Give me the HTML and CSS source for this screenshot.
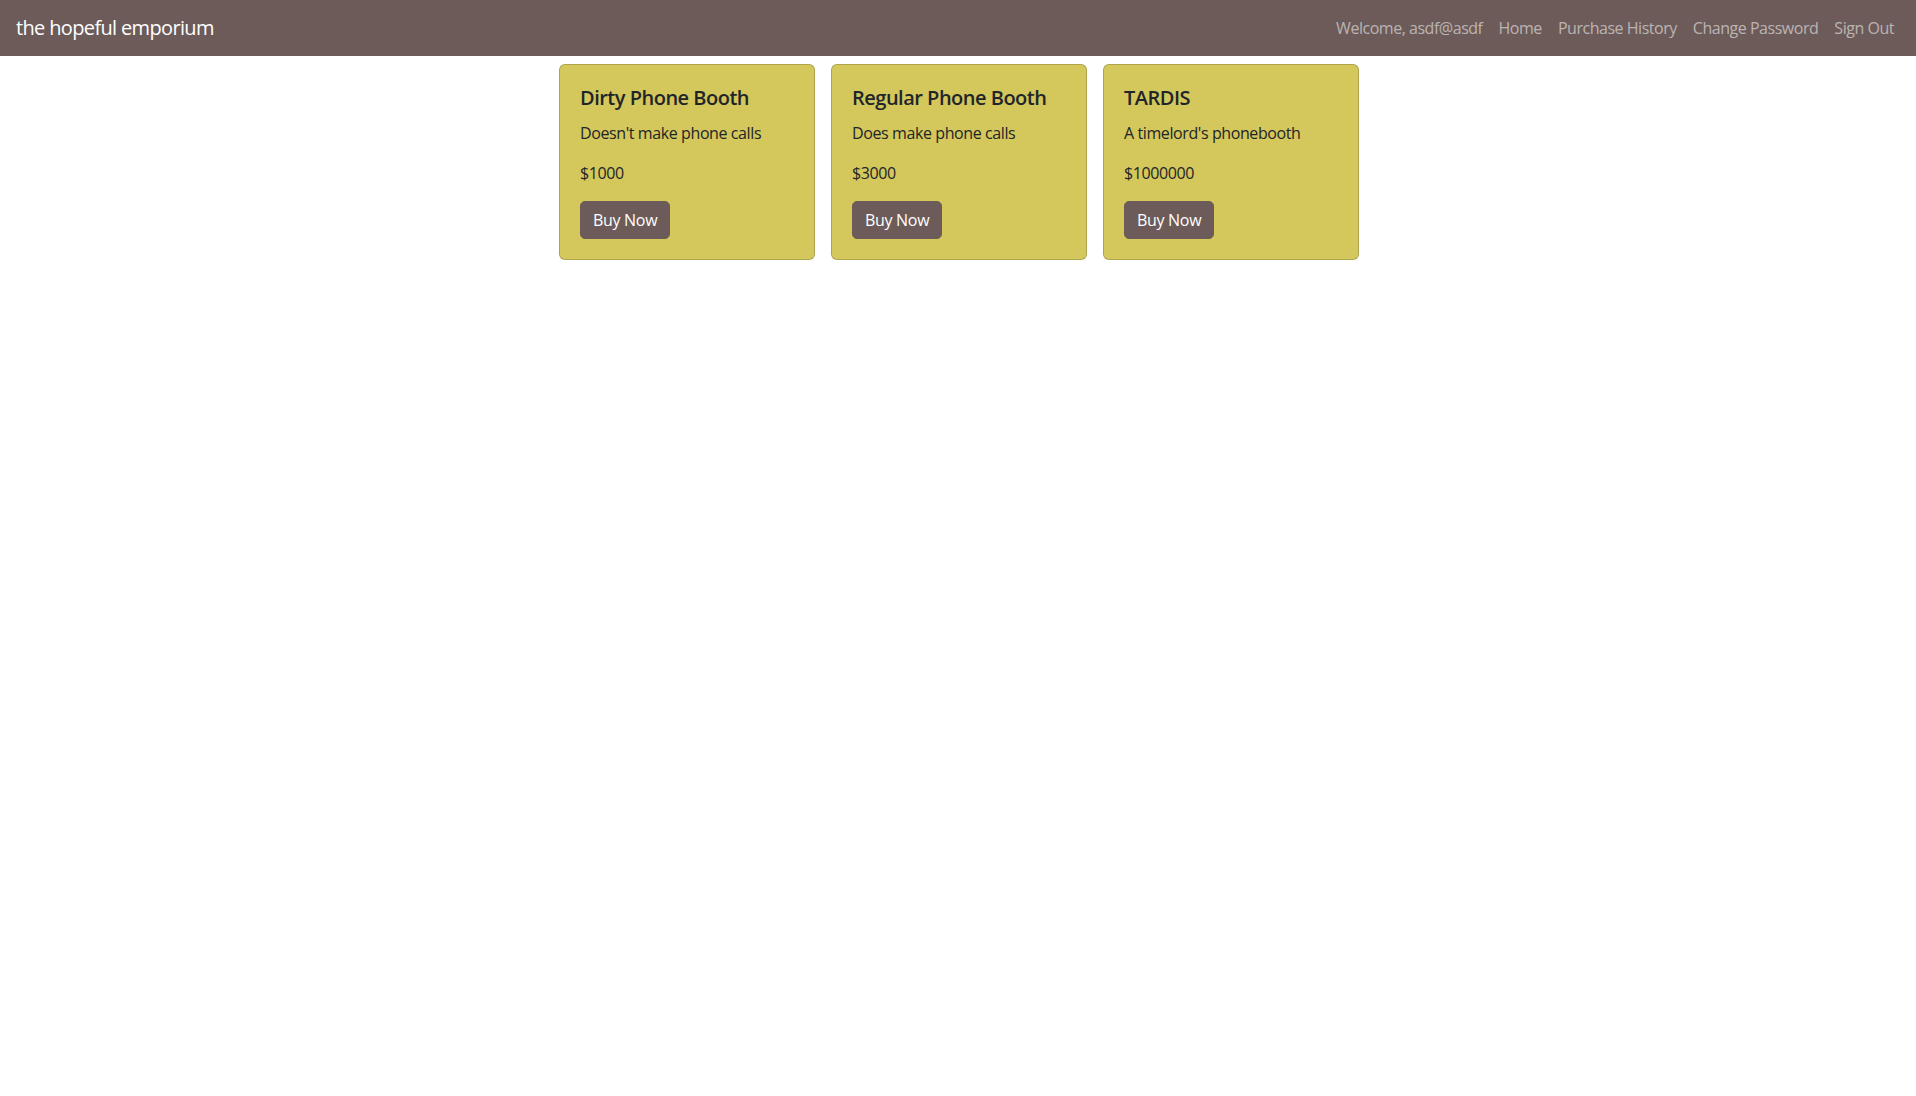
FILE: index.html
```html
<!DOCTYPE html>
<html lang="en">
<head>
<meta charset="utf-8">
<title>the hopeful emporium</title>
<link rel="stylesheet" href="styles.css">
</head>
<body>
<nav class="navbar">
  <a class="brand" href="#">the hopeful emporium</a>
  <ul class="nav">
    <li><span class="nav-link">Welcome, asdf@asdf</span></li>
    <li><a class="nav-link" href="#">Home</a></li>
    <li><a class="nav-link" href="#">Purchase History</a></li>
    <li><a class="nav-link" href="#">Change Password</a></li>
    <li><a class="nav-link" href="#">Sign Out</a></li>
  </ul>
</nav>
<main class="products">
  <div class="card">
    <h5 class="card-title">Dirty Phone Booth</h5>
    <p class="card-text">Doesn't make phone calls</p>
    <p class="card-text">$1000</p>
    <button class="btn">Buy Now</button>
  </div>
  <div class="card">
    <h5 class="card-title">Regular Phone Booth</h5>
    <p class="card-text">Does make phone calls</p>
    <p class="card-text">$3000</p>
    <button class="btn">Buy Now</button>
  </div>
  <div class="card">
    <h5 class="card-title">TARDIS</h5>
    <p class="card-text">A timelord's phonebooth</p>
    <p class="card-text">$1000000</p>
    <button class="btn">Buy Now</button>
  </div>
</main>
</body>
</html>
```
FILE: styles.css
```css
* { box-sizing: border-box; }
html, body { margin: 0; padding: 0; }
body {
  font-family: "Open Sans", "Noto Sans", sans-serif;
  font-size: 16px;
  line-height: 1.5;
  color: #212529;
  background: #fff;
}
.navbar {
  display: flex;
  align-items: center;
  justify-content: space-between;
  height: 56px;
  padding: 0 14px 0 16px;
  background: #6c5b59;
}
.brand {
  color: #fff;
  font-size: 20px;
  line-height: 30px;
  text-decoration: none;
  letter-spacing: -0.65px;
}
.nav {
  display: flex;
  list-style: none;
  margin: 0;
  padding: 0;
}
.nav-link {
  display: block;
  padding: 8px;
  color: rgba(255, 255, 255, 0.55);
  text-decoration: none;
  font-size: 16px;
  line-height: 24px;
  letter-spacing: -0.47px;
}
.products {
  display: flex;
  justify-content: center;
  gap: 16px;
  padding-top: 8px;
  padding-left: 2px;
}
.card {
  width: 256px;
  background: #d4c75c;
  border: 1px solid rgba(0, 0, 0, 0.175);
  border-radius: 6px;
  padding: 21px 20px 20px;
}
.card-title {
  margin: 0 0 11px;
  font-size: 20px;
  font-weight: 600;
  line-height: 24px;
  letter-spacing: -0.5px;
}
.card-text {
  margin: 0 0 16px;
  letter-spacing: -0.4px;
}
.btn {
  display: inline-block;
  font-family: inherit;
  font-size: 16px;
  line-height: 24px;
  padding: 6px 12px;
  border: 1px solid #6c5b59;
  border-radius: 5px;
  background: #6c5b59;
  color: #fff;
  letter-spacing: -0.3px;
  cursor: pointer;
}
```
